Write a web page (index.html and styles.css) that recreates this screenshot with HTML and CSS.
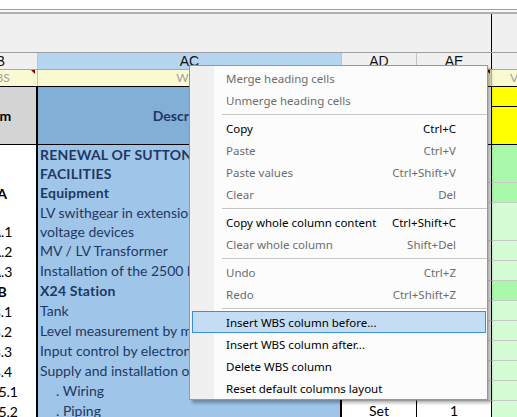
FILE: index.html
```html
<!DOCTYPE html>
<html lang="en">
<head>
  <meta charset="UTF-8" />
  <title>WBS sheet</title>
  <link rel="stylesheet" href="styles.css">
</head>
<body>
<div class="window">
  <div class="titlebar"></div>
  <div class="toolbar">
    <div class="toolbar-inner">
      <div class="pane-left"></div>
    </div>
  </div>

  <div class="sheet">
    <div class="row colhead">
      <div class="cell col-b">B</div>
      <div class="cell col-ac selected">AC</div>
      <div class="cell col-ad">AD</div>
      <div class="cell col-ae">AE</div>
      <div class="cell col-af"></div>
    </div>

    <div class="row filter">
      <div class="cell col-b marked">WBS</div>
      <div class="cell col-ac">WBS</div>
      <div class="cell col-ad"></div>
      <div class="cell col-ae marked"></div>
      <div class="cell col-af"><span class="af-label">Value</span></div>
    </div>

    <div class="row heading">
      <div class="cell col-b">Item</div>
      <div class="cell col-ac">Description</div>
      <div class="cell col-ad"></div>
      <div class="cell col-ae"></div>
      <div class="cell col-af">
        <div class="af-top"></div>
        <div class="af-bottom"></div>
      </div>
    </div>

    <div class="row data tall hi">
      <div class="cell col-b"></div>
      <div class="cell col-ac bold">RENEWAL OF SUTTON FIRE<br>FACILITIES</div>
      <div class="cell col-ad"></div>
      <div class="cell col-ae"></div>
      <div class="cell col-af"></div>
    </div>
    <div class="row data hi">
      <div class="cell col-b bold">A</div>
      <div class="cell col-ac bold">Equipment</div>
      <div class="cell col-ad"></div>
      <div class="cell col-ae"></div>
      <div class="cell col-af"></div>
    </div>
    <div class="row data tall">
      <div class="cell col-b">A.1</div>
      <div class="cell col-ac">LV swithgear in extension of the low<br>voltage devices</div>
      <div class="cell col-ad"></div>
      <div class="cell col-ae"></div>
      <div class="cell col-af"></div>
    </div>
    <div class="row data">
      <div class="cell col-b">A.2</div>
      <div class="cell col-ac">MV / LV Transformer</div>
      <div class="cell col-ad"></div>
      <div class="cell col-ae"></div>
      <div class="cell col-af"></div>
    </div>
    <div class="row data">
      <div class="cell col-b">A.3</div>
      <div class="cell col-ac">Installation of the 2500 kVA unit</div>
      <div class="cell col-ad"></div>
      <div class="cell col-ae"></div>
      <div class="cell col-af"></div>
    </div>
    <div class="row data hi">
      <div class="cell col-b bold">B</div>
      <div class="cell col-ac bold">X24 Station</div>
      <div class="cell col-ad"></div>
      <div class="cell col-ae"></div>
      <div class="cell col-af"></div>
    </div>
    <div class="row data">
      <div class="cell col-b">B.1</div>
      <div class="cell col-ac">Tank</div>
      <div class="cell col-ad"></div>
      <div class="cell col-ae"></div>
      <div class="cell col-af"></div>
    </div>
    <div class="row data">
      <div class="cell col-b">B.2</div>
      <div class="cell col-ac">Level measurement by meter</div>
      <div class="cell col-ad"></div>
      <div class="cell col-ae"></div>
      <div class="cell col-af"></div>
    </div>
    <div class="row data">
      <div class="cell col-b">B.3</div>
      <div class="cell col-ac">Input control by electronic valve</div>
      <div class="cell col-ad"></div>
      <div class="cell col-ae"></div>
      <div class="cell col-af"></div>
    </div>
    <div class="row data">
      <div class="cell col-b">B.4</div>
      <div class="cell col-ac">Supply and installation of pumps</div>
      <div class="cell col-ad"></div>
      <div class="cell col-ae"></div>
      <div class="cell col-af"></div>
    </div>
    <div class="row data">
      <div class="cell col-b">B.5.1</div>
      <div class="cell col-ac indent">. Wiring</div>
      <div class="cell col-ad"></div>
      <div class="cell col-ae"></div>
      <div class="cell col-af"></div>
    </div>
    <div class="row data">
      <div class="cell col-b">B.5.2</div>
      <div class="cell col-ac indent">. Piping</div>
      <div class="cell col-ad">Set</div>
      <div class="cell col-ae">1</div>
      <div class="cell col-af"></div>
    </div>
  </div>

  <div class="menu">
    <div class="item off"><span>Merge heading cells</span></div>
    <div class="item off"><span>Unmerge heading cells</span></div>
    <div class="sep"></div>
    <div class="item"><span>Copy</span><span>Ctrl+C</span></div>
    <div class="item off"><span>Paste</span><span>Ctrl+V</span></div>
    <div class="item off"><span>Paste values</span><span>Ctrl+Shift+V</span></div>
    <div class="item off"><span>Clear</span><span>Del</span></div>
    <div class="sep"></div>
    <div class="item"><span>Copy whole column content</span><span>Ctrl+Shift+C</span></div>
    <div class="item off"><span>Clear whole column</span><span>Shift+Del</span></div>
    <div class="sep"></div>
    <div class="item off"><span>Undo</span><span>Ctrl+Z</span></div>
    <div class="item off"><span>Redo</span><span>Ctrl+Shift+Z</span></div>
    <div class="sep"></div>
    <div class="item hover"><span>Insert WBS column before...</span></div>
    <div class="item"><span>Insert WBS column after...</span></div>
    <div class="item"><span>Delete WBS column</span></div>
    <div class="item"><span>Reset default columns layout</span></div>
  </div>
</div>
</body>
</html>
```

FILE: styles.css
```css
* {
  box-sizing: border-box;
}
body {
  margin: 0;
  background: #fff;
  font-family: Lato, "Open Sans", sans-serif;
}
.window {
  position: relative;
  width: 517px;
  height: 417px;
  overflow: hidden;
}
.titlebar {
  height: 10px;
  background: #fff;
  border-bottom: 1px solid #a0a0a0;
}
.toolbar {
  border-top: 2px solid #f8f8f8;
}
.toolbar-inner {
  height: 40px;
  border-top: 2px solid #b0b0b0;
  background: #f0f0f0;
}
.pane-left {
  width: 492px;
  height: 100%;
  border-right: 1px solid #000;
}

/* grid */
.sheet {
  margin-left: -42px;
  width: 634px;
}
.row {
  display: grid;
  grid-template-columns: 80px 304px 75px 75px 100px;
}
.cell {
  overflow: hidden;
  white-space: nowrap;
}

.colhead {
  height: 18px;
  border-top: 1px solid #a0a0a0;
  border-bottom: 1px solid #a8a8a8;
  background: #f0f0f0;
}
.colhead .cell {
  font-family: "Liberation Sans", Arial, sans-serif;
  font-size: 14px;
  line-height: 16px;
  text-align: center;
  color: #111;
  border-right: 1px solid #c4c4c4;
}
.colhead .col-b {
  padding-left: 6px;
}
.colhead .selected {
  background: #b5d5f0;
}
.colhead .col-ae {
  border-right-color: #000;
}

.filter {
  height: 17px;
  border-bottom: 1px solid #000;
  background: #fafad2;
}
.filter .cell {
  font-size: 12px;
  line-height: 16px;
  text-align: center;
  color: #a0a0a0;
  border-right: 1px solid #c4c4c4;
}
.filter .col-b {
  padding-right: 2px;
}
.filter .col-af {
  text-align: left;
}
.af-label {
  display: inline-block;
  margin-left: 18px;
}
.marked {
  position: relative;
}
.marked::after {
  content: '';
  position: absolute;
  top: 0;
  right: 2px;
  border-top: 4px solid #800000;
  border-left: 4px solid transparent;
}
.filter .col-ae.marked::after {
  right: 1px;
}

.heading {
  height: 58px;
  border-bottom: 1px solid #000;
}
.heading .cell {
  display: flex;
  align-items: center;
  justify-content: center;
  font-size: 14px;
  font-weight: bold;
  background: #fff;
}
.heading .col-b {
  background: #d4d4d4;
  color: #000;
}
.heading .col-ac {
  background: #82afd6;
  color: #1f3864;
}
.heading .col-af {
  display: block;
  background: #ff0;
}
.af-top {
  height: 20px;
  border-bottom: 1px solid #000;
}

.col-b,
.col-ac {
  border-right: 2px solid #000;
}
.col-ad,
.col-ae {
  border-right: 1px solid #000;
}

/* data rows */
.data {
  height: 20px;
}
.data.tall {
  height: 38px;
}
.data .cell {
  font-size: 14px;
  line-height: 19px;
}
.data .col-b {
  display: flex;
  align-items: flex-end;
  justify-content: center;
  padding-left: 10px;
  color: #000;
}
.data .col-ac {
  background: #9fc5e8;
  color: #1f3864;
  padding-left: 2px;
}
.data .col-ac.bold {
  letter-spacing: 0.2px;
}
.data .col-ac.indent {
  padding-left: 18px;
}
.data .col-ad,
.data .col-ae {
  text-align: center;
  border-bottom: 1px solid #d9d9d9;
}
.data .col-af {
  background: #d5fdd5;
  border-bottom: 1px solid #c8c8c8;
}
.data.hi .col-af {
  background: #aaf8aa;
}
.bold {
  font-weight: bold;
}

/* context menu */
.menu {
  position: absolute;
  left: 189px;
  top: 65px;
  width: 299px;
  padding: 1px 0 0;
  border: 1px solid #979797;
  background: linear-gradient(to right, #f0f0f0 0 24px, #fcfcfc 24px);
  box-shadow: 3px 3px 3px rgba(0,0,0,0.3);
  font-family: "Noto Sans", sans-serif;
  font-size: 11.5px;
}
.item {
  display: flex;
  justify-content: space-between;
  align-items: center;
  height: 22px;
  margin: 0 1px 0 2px;
  padding: 0 29px 0 33px;
  border: 1px solid transparent;
  color: #000;
}
.item.off {
  color: #6d6d6d;
}
.item.hover {
  background: #c4ddf4;
  border-color: #3c8fdc;
}
.sep {
  height: 2px;
  margin: 3px 0 1px 32px;
  background: #c5c5c5;
  border-bottom: 1px solid #fff;
}
```
